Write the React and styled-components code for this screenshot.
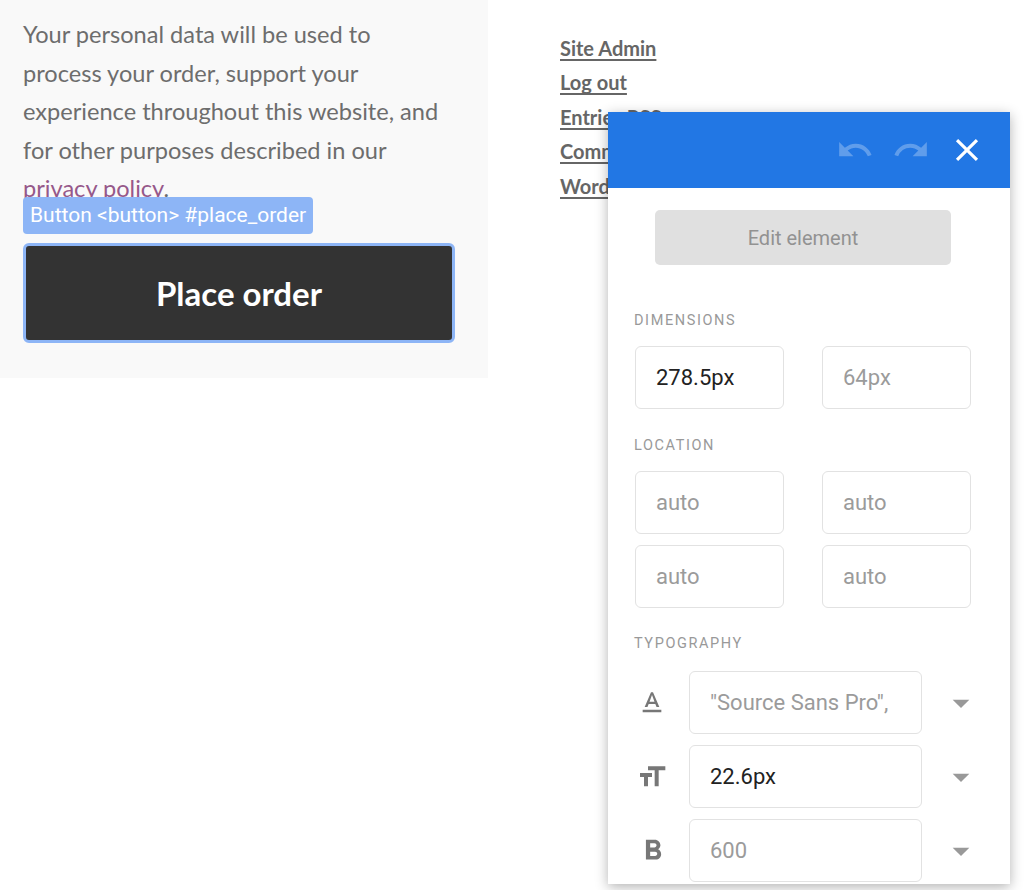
import styled, {createGlobalStyle} from "styled-components";
import {MdUndo, MdRedo, MdClose, MdArrowDropDown, MdTextFormat, MdFormatSize, MdFormatBold} from "react-icons/md";

const GlobalStyle = createGlobalStyle`
    html, body {
        margin: 0;
        padding: 0;
        background: #fff;
    }
    body {
        width: 1024px;
        height: 890px;
        overflow: hidden;
        font-family: Lato, "Noto Sans", sans-serif;
    }
`;

const Page = styled.div`
    position: relative;
    display: flex;
    align-items: flex-start;
    gap: 72px;
    height: 890px;
`;

const Checkout = styled.div`
    width: 488px;
    box-sizing: border-box;
    padding: 15px 40px 35px 23px;
    background: #f9f9f9;
`;

const Terms = styled.p`
    margin: 0;
    font-size: 23.6px;
    line-height: 38.5px;
    color: #6d6d6d;
`;

const PolicyLink = styled.a`
    color: #96588a;
    text-decoration: none;
`;

const ButtonWrap = styled.div`
    position: relative;
    margin-top: 35px;
`;

const Tag = styled.div`
    position: absolute;
    left: 0;
    top: -46px;
    height: 37px;
    padding: 0 7px;
    display: flex;
    align-items: center;
    background: #8db5f6;
    border-radius: 4px;
    color: #fff;
    font-family: Roboto, sans-serif;
    font-size: 21px;
    white-space: nowrap;
`;

const PlaceOrder = styled.button`
    display: block;
    width: 432px;
    height: 100px;
    background: #333;
    border: 3px solid #8db5f6;
    border-radius: 6px;
    color: #fff;
    font-family: Lato, sans-serif;
    font-weight: 700;
    font-size: 33px;
    cursor: pointer;
`;

const Sidebar = styled.ul`
    list-style: none;
    margin: 0;
    padding: 31px 0 0;
`;

const SideLink = styled.li`
    font-size: 20px;
    font-weight: 700;
    line-height: 34.4px;
    color: #666;
    text-decoration: underline;
    text-underline-offset: 3px;
`;

const Panel = styled.div`
    position: absolute;
    left: 608px;
    top: 112px;
    width: 402px;
    height: 772px;
    background: #fff;
    box-shadow: 0 3px 12px rgba(0, 0, 0, 0.3);
    overflow: hidden;
    font-family: Roboto, sans-serif;
`;

const Header = styled.div`
    height: 76px;
    background: #2277e4;
    display: flex;
    align-items: center;
    justify-content: flex-end;
    gap: 18px;
    padding-right: 24px;
`;

const HeadIcon = styled.span`
    display: flex;
    color: #fff;
    opacity: ${p => p.$faded ? 0.28 : 1};
`;

const Body = styled.div`
    padding: 22px 26px 0 26px;
`;

const EditButton = styled.div`
    width: 296px;
    height: 55px;
    margin-left: 21px;
    background: #e0e0e0;
    border-radius: 5px;
    color: #929292;
    font-size: 20px;
    display: flex;
    align-items: center;
    justify-content: center;
`;

const Section = styled.div`
    margin-top: ${p => p.$top}px;
    font-size: 14.5px;
    letter-spacing: 1.6px;
    color: #999;
    line-height: 20px;
`;

const Grid = styled.div`
    margin-top: 15px;
    margin-left: 1px;
    display: grid;
    grid-template-columns: 149px 149px;
    column-gap: 38px;
    row-gap: 11px;
`;

const Field = styled.div`
    box-sizing: border-box;
    height: 63px;
    width: ${p => p.$w ? p.$w + "px" : "auto"};
    border: 1.5px solid #e2e2e2;
    border-radius: 6px;
    padding-left: 20px;
    display: flex;
    align-items: center;
    font-size: 22px;
    color: ${p => p.$filled ? "#222" : "#9b9b9b"};
    white-space: nowrap;
    overflow: hidden;
`;

const TypoList = styled.div`
    margin-top: 17px;
    display: flex;
    flex-direction: column;
    gap: 11px;
`;

const TypoRow = styled.div`
    display: flex;
    align-items: center;
`;

const RowIcon = styled.span`
    width: 53px;
    display: flex;
    justify-content: flex-start;
    padding-left: 2px;
    color: #777;
`;

const Caret = styled.span`
    display: flex;
    margin-left: 19px;
    color: #999;
`;

export default function App() {
    return (
        <>
            <GlobalStyle />
            <Page>
                <Checkout>
                    <Terms>
                        Your personal data will be used to process your order, support your experience throughout this website, and for other purposes described in our <PolicyLink href="#">privacy policy</PolicyLink>.
                    </Terms>
                    <ButtonWrap>
                        <Tag>Button &lt;button&gt; #place_order</Tag>
                        <PlaceOrder>Place order</PlaceOrder>
                    </ButtonWrap>
                </Checkout>
                <Sidebar>
                    <SideLink>Site Admin</SideLink>
                    <SideLink>Log out</SideLink>
                    <SideLink>Entries RSS</SideLink>
                    <SideLink>Comments RSS</SideLink>
                    <SideLink>WordPress.org</SideLink>
                </Sidebar>
                <Panel>
                    <Header>
                        <HeadIcon $faded><MdUndo size={38} /></HeadIcon>
                        <HeadIcon $faded><MdRedo size={38} /></HeadIcon>
                        <HeadIcon><MdClose size={38} /></HeadIcon>
                    </Header>
                    <Body>
                        <EditButton>Edit element</EditButton>
                        <Section $top={46}>DIMENSIONS</Section>
                        <Grid>
                            <Field $filled>278.5px</Field>
                            <Field>64px</Field>
                        </Grid>
                        <Section $top={27}>LOCATION</Section>
                        <Grid>
                            <Field>auto</Field>
                            <Field>auto</Field>
                            <Field>auto</Field>
                            <Field>auto</Field>
                        </Grid>
                        <Section $top={26}>TYPOGRAPHY</Section>
                        <TypoList>
                            <TypoRow>
                                <RowIcon><MdTextFormat size={32} /></RowIcon>
                                <Field $w={233}>"Source Sans Pro",</Field>
                                <Caret><MdArrowDropDown size={40} /></Caret>
                            </TypoRow>
                            <TypoRow>
                                <RowIcon><MdFormatSize size={32} /></RowIcon>
                                <Field $w={233} $filled>22.6px</Field>
                                <Caret><MdArrowDropDown size={40} /></Caret>
                            </TypoRow>
                            <TypoRow>
                                <RowIcon><MdFormatBold size={34} /></RowIcon>
                                <Field $w={233}>600</Field>
                                <Caret><MdArrowDropDown size={40} /></Caret>
                            </TypoRow>
                        </TypoList>
                    </Body>
                </Panel>
            </Page>
        </>
    );
}
